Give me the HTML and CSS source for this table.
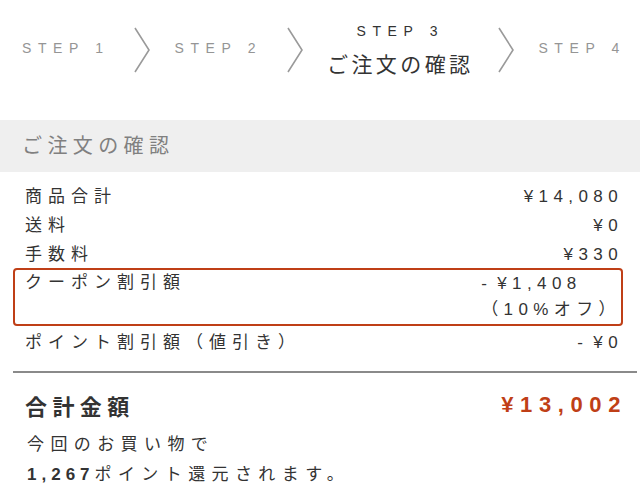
FILE: index.html
```html
<!DOCTYPE html>
<html lang="ja">
<head>
  <meta charset="UTF-8">
  <meta name="viewport" content="width=device-width, initial-scale=1.0">
  <title>ご注文の確認</title>
  <link rel="stylesheet" href="styles.css">
</head>
<body>
  <div class="steps">
    <div class="step">STEP 1</div>
    <svg class="chevron" width="16" height="46" viewBox="0 0 16 46"><path d="M1 1 L15 23 L1 45" fill="none" stroke="#9a9a9a" stroke-width="1.6"/></svg>
    <div class="step">STEP 2</div>
    <svg class="chevron" width="16" height="46" viewBox="0 0 16 46"><path d="M1 1 L15 23 L1 45" fill="none" stroke="#9a9a9a" stroke-width="1.6"/></svg>
    <div class="step current">
      <div class="step-no">STEP 3</div>
      <div class="step-name">ご注文の確認</div>
    </div>
    <svg class="chevron" width="16" height="46" viewBox="0 0 16 46"><path d="M1 1 L15 23 L1 45" fill="none" stroke="#9a9a9a" stroke-width="1.6"/></svg>
    <div class="step">STEP 4</div>
  </div>

  <div class="section-title">ご注文の確認</div>

  <div class="summary">
    <div class="row"><span>商品合計</span><span class="price">¥14,080</span></div>
    <div class="row"><span>送料</span><span class="price">¥0</span></div>
    <div class="row"><span>手数料</span><span class="price">¥330</span></div>
    <div class="coupon">
      <span>クーポン割引額</span>
      <div class="coupon-value">
        <div class="price"><span class="minus">-</span>¥1,408</div>
        <div class="price">（10%オフ）</div>
      </div>
    </div>
    <div class="row points"><span>ポイント割引額（値引き）</span><span class="price"><span class="minus">-</span>¥0</span></div>
  </div>

  <div class="divider"></div>

  <div class="total">
    <span>合計金額</span>
    <span class="total-price">¥13,002</span>
  </div>
  <div class="reward">
    <div>今回のお買い物で</div>
    <div><b>1,267</b>ポイント還元されます。</div>
  </div>
</body>
</html>
```

FILE: styles.css
```css
:root {
  --text: #333333;
  --muted: #999999;
  --accent: #bf3f17;
  --band: #efefef;
}
* {
  box-sizing: border-box;
  margin: 0;
  padding: 0;
}
body {
  font-family: 'Liberation Sans', 'Noto Sans CJK JP', sans-serif;
  color: var(--text);
  background: #ffffff;
  width: 640px;
}
.steps {
  display: flex;
  justify-content: space-between;
  align-items: center;
  height: 96px;
  padding: 0 14px 0 22px;
}
.step {
  font-size: 14px;
  letter-spacing: 6.6px;
  color: #959595;
  white-space: nowrap;
}
.step.current {
  display: flex;
  flex-direction: column;
  align-items: center;
  color: var(--text);
  margin-top: 4px;
}
.step-name {
  font-size: 21px;
  letter-spacing: 3.4px;
  margin-top: 9px;
}
.chevron {
  display: block;
  margin-top: 4px;
}
.section-title {
  margin-top: 24px;
  height: 52px;
  line-height: 52px;
  background: var(--band);
  padding-left: 22px;
  font-size: 20px;
  letter-spacing: 5.4px;
  color: #808080;
}
.summary {
  margin: 10px 17px 0 13px;
  font-size: 17px;
  letter-spacing: 6px;
}
.row {
  display: flex;
  justify-content: space-between;
  line-height: 29px;
  padding-left: 12px;
}
.price {
  letter-spacing: 5.4px;
}
.minus {
  margin-right: 5px;
}
.coupon {
  display: flex;
  justify-content: space-between;
  border: 2px solid var(--accent);
  border-radius: 4px;
  padding: 0 0 0 10px;
  line-height: 26px;
  margin-top: -1px;
}
.coupon-value {
  text-align: left;
  padding: 1px 0;
}
.points {
  margin-top: 2px;
}
.divider {
  margin: 14px 3px 0 13px;
  height: 2px;
  background: #8a8a8a;
}
.total {
  display: flex;
  justify-content: space-between;
  align-items: center;
  margin: 16px 13px 0 25px;
  font-size: 22px;
  font-weight: 700;
  letter-spacing: 5.4px;
}
.total-price {
  color: var(--accent);
  letter-spacing: 6.6px;
}
.reward {
  margin: 9px 0 0 27px;
  font-size: 17px;
  line-height: 30px;
  letter-spacing: 6.4px;
}
.reward b {
  letter-spacing: 5px;
}
```
